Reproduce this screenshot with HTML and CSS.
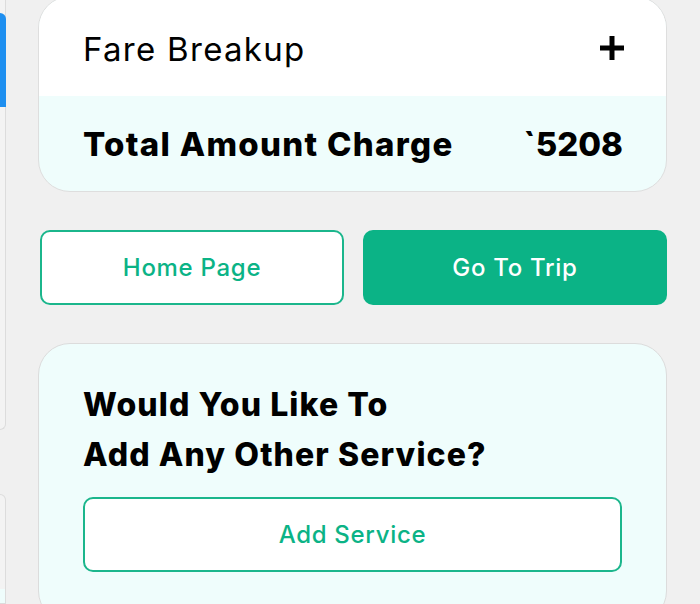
FILE: index.html
```html
<!DOCTYPE html>
<html lang="en">
<head>
  <meta charset="UTF-8" />
  <meta name="viewport" content="width=device-width, initial-scale=1.0"/>
  <title>Booking Summary</title>
  <link rel="stylesheet" href="styles.css">
</head>
<body>
  <div class="pager">
    <div class="peek">
      <div class="peek-card">
        <div class="peek-head"></div>
      </div>
      <div class="peek-card next"></div>
    </div>

    <main class="page">
      <section class="fare-card">
        <div class="fare-head">
          <span>Fare Breakup</span>
          <svg class="plus" width="28" height="28" viewBox="0 0 28 28">
            <path d="M14 2v24M2 14h24" stroke="#000" stroke-width="5" fill="none"/>
          </svg>
        </div>
        <div class="fare-total">
          <span>Total Amount Charge</span>
          <span class="amount">`5208</span>
        </div>
      </section>

      <div class="actions">
        <button class="btn outline">Home Page</button>
        <button class="btn solid">Go To Trip</button>
      </div>

      <section class="service-card">
        <h3>Would You Like To<br>Add Any Other Service?</h3>
        <button class="btn outline wide">Add Service</button>
      </section>
    </main>
  </div>
</body>
</html>
```

FILE: styles.css
```css
body {
  margin: 0;
  background-color: #f0f0f0;
  font-family: "Inter", "Noto Sans", sans-serif;
  color: #000;
  overflow: hidden;
}
.pager {
  display: flex;
  height: 604px;
  overflow: hidden;
}
.peek {
  width: 6px;
  flex-shrink: 0;
  display: flex;
  flex-direction: column;
  gap: 64px;
}
.peek-card {
  flex-shrink: 0;
  height: 430px;
  background-color: #f3f3f3;
  border-right: 1px solid #dcdcdc;
  border-bottom: 1px solid #dcdcdc;
  border-bottom-right-radius: 14px;
  box-sizing: border-box;
  padding-top: 13px;
}
.peek-card.next {
  height: 110px;
  border-top: 1px solid #dcdcdc;
  border-radius: 0 14px 0 0;
  background: linear-gradient(#f3f3f3 94px, #effdfc 94px);
}
.peek-head {
  height: 94px;
  width: 6px;
  background-color: #1e8ff0;
  border-top-right-radius: 10px;
}
.page {
  margin-left: 32px;
  width: 629px;
}
.fare-card {
  margin-top: -4px;
  background-color: #effdfc;
  border: 1px solid #dedede;
  border-radius: 32px;
  overflow: hidden;
}
.fare-head {
  height: 99px;
  background-color: #fff;
  display: flex;
  align-items: center;
  justify-content: space-between;
  padding: 0 40px 0 44px;
  font-size: 33px;
  font-weight: 400;
  letter-spacing: 1.3px;
}
.fare-head span {
  margin-top: 4px;
}
.plus {
  margin-top: 2px;
}
.fare-total {
  height: 95px;
  display: flex;
  align-items: center;
  justify-content: space-between;
  padding: 0 43px 0 44px;
  font-size: 33px;
  font-weight: 800;
  letter-spacing: 1.3px;
}
.amount {
  letter-spacing: 0;
}
.actions {
  display: grid;
  grid-template-columns: 1fr 1fr;
  gap: 19px;
  margin: 38px 0 0 2px;
}
.btn {
  height: 75px;
  font-family: inherit;
  font-size: 24px;
  font-weight: 500;
  letter-spacing: 0.7px;
  border-radius: 10px;
  cursor: pointer;
}
.btn.outline {
  background-color: #fff;
  color: #0bb386;
  border: 2px solid #1bb68c;
}
.btn.solid {
  background-color: #0bb386;
  color: #fff;
  border: none;
}
.service-card {
  margin-top: 38px;
  height: 280px;
  box-sizing: border-box;
  background-color: #effdfc;
  border: 1px solid #dcdcdc;
  border-radius: 32px;
  padding: 36px 44px 0 44px;
}
.service-card h3 {
  margin: 0 0 17px 0;
  font-size: 32px;
  font-weight: 800;
  line-height: 50px;
  letter-spacing: 1.1px;
}
.btn.wide {
  width: 100%;
}
```
